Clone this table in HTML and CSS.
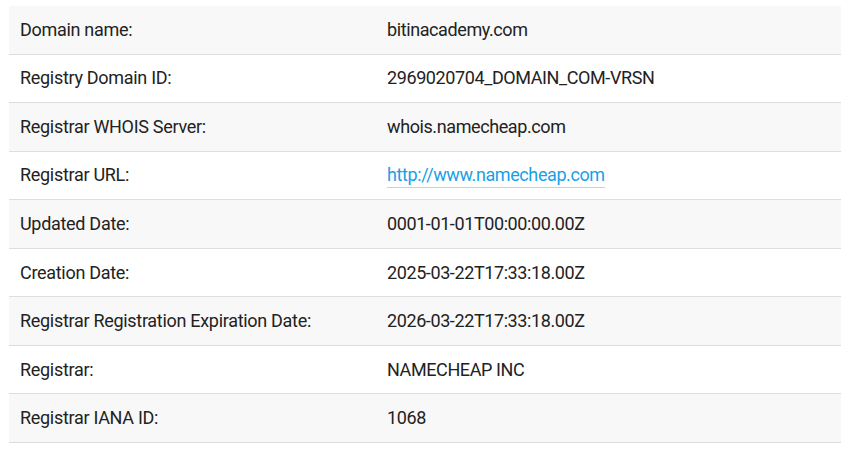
FILE: index.html
```html
<!DOCTYPE html>
<html>
<head>
<meta charset="utf-8">
<link rel="stylesheet" href="styles.css">
</head>
<body>
<div class="wrap">
<table class="whois">
<tbody>
<tr><td class="label">Domain name:</td><td class="value">bitinacademy.com</td></tr>
<tr><td class="label">Registry Domain ID:</td><td class="value">2969020704_DOMAIN_COM-VRSN</td></tr>
<tr><td class="label">Registrar WHOIS Server:</td><td class="value">whois.namecheap.com</td></tr>
<tr><td class="label">Registrar URL:</td><td class="value"><a class="link" href="#">http://www.namecheap.com</a></td></tr>
<tr><td class="label">Updated Date:</td><td class="value">0001-01-01T00:00:00.00Z</td></tr>
<tr><td class="label">Creation Date:</td><td class="value">2025-03-22T17:33:18.00Z</td></tr>
<tr><td class="label">Registrar Registration Expiration Date:</td><td class="value">2026-03-22T17:33:18.00Z</td></tr>
<tr><td class="label">Registrar:</td><td class="value">NAMECHEAP INC</td></tr>
<tr><td class="label">Registrar IANA ID:</td><td class="value">1068</td></tr>
</tbody>
</table>
</div>
</body>
</html>
```
FILE: styles.css
```css
html, body {
  margin: 0;
  padding: 0;
  background: #fff;
  overflow: hidden;
}
.wrap {
  padding: 6px 0 0 9px;
}
.whois {
  width: 840px;
  border-collapse: collapse;
  font-family: Roboto, "Liberation Sans", sans-serif;
  font-size: 18px;
  letter-spacing: -0.3px;
  color: #222;
}
.whois tr {
  border-bottom: 1px solid #dedede;
}
.whois tr:nth-child(odd) {
  background: #f8f8f8;
}
.whois td {
  height: 47.55px;
  padding: 0 11px;
  vertical-align: middle;
  line-height: 24px;
}
.label {
  width: 345px;
}
.value {
  letter-spacing: -0.4px;
}
.link {
  color: #1a9fe6;
  text-decoration: none;
  border-bottom: 1px solid #a6dcf6;
  padding-bottom: 2px;
}
```
